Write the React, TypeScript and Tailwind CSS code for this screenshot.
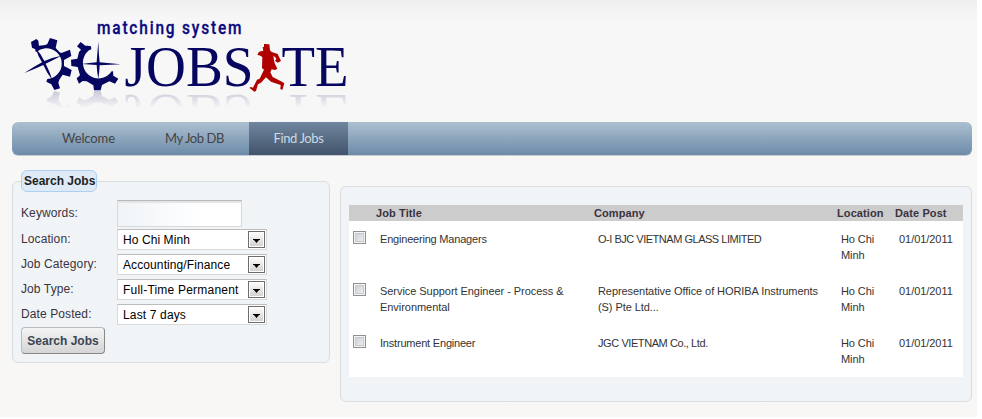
import React from "react";

const jobs = [
  { title: "Engineering Managers", company: "O-I BJC VIETNAM GLASS LIMITED", titleTracking: "tracking-[-0.2px]", companyTracking: "tracking-[-0.48px]" },
  { title: "Service Support Engineer - Process & Environmental", company: "Representative Office of HORIBA Instruments (S) Pte Ltd...", titleTracking: "tracking-[-0.05px]", companyTracking: "tracking-[-0.07px]" },
  { title: "Instrument Engineer", company: "JGC VIETNAM Co., Ltd.", titleTracking: "tracking-[-0.2px]", companyTracking: "tracking-[-0.42px]" },
];

const filters = [
  { label: "Location:", value: "Ho Chi Minh", tracking: "tracking-[0.08px]" },
  { label: "Job Category:", value: "Accounting/Finance", tracking: "tracking-[0.1px]" },
  { label: "Job Type:", value: "Full-Time Permanent", tracking: "tracking-[0.21px]" },
  { label: "Date Posted:", value: "Last 7 days", tracking: "tracking-[0.15px]" },
];

function Gears() {
  return (
    <g transform="translate(10 10) scale(.33333)" fill="#060660">
      <path d="M63 96 L79 87 L85 92 L87 107 L106 105 L112 102 L120 84 L142 91 L137 114 L149 127 L154 129 L180 119 L184 138 L162 150 L162 168 L185 180 L180 200 L158 194 L148 209 L145 218 L150 235 L133 240 L124 223 L109 215 L112 207 A46 46 0 0 0 106 115 Q90 117 79 126 L76 124 L76 118 L66 113 Z" />
      <path d="M43 189 Q72 170 96 157 Q84 139 77 115 Q94 133 103 153 Q127 142 154 137 Q130 150 107 161 Q119 184 127 210 Q110 188 100 165 Q72 178 43 189 Z" />
      <path d="M201 109 L212 96 L226 107 L233 107 L243 109 L244 118 L237 121 A47 47 0 1 0 305 184 L309 184 L310 197 L325 206 L315 221 L298 214 L276 225 L272 241 L252 241 L250 226 L230 214 L218 213 L207 221 L200 205 L210 196 L203 171 L184 168 L183 149 L202 146 L207 126 L213 119 Z" />
      <path d="M265 94 Q266 130 269 157 Q300 160 332 163 Q300 165 269 166 Q268 188 265 207 Q261 188 260 165 Q238 164 215 162 Q238 159 260 157 Q262 130 265 94 Z" />
    </g>
  );
}

function Logo() {
  return (
    <svg width="360" height="122" viewBox="0 0 360 122" className="block">
      <defs>
        <linearGradient id="fade" x1="0" x2="0" y1="0" y2="1">
          <stop offset="0" stopColor="#fff" stopOpacity=".2" />
          <stop offset="1" stopColor="#fff" stopOpacity="0" />
        </linearGradient>
        <mask id="reflection" maskUnits="userSpaceOnUse" x="0" y="90" width="360" height="18">
          <rect x="0" y="90" width="360" height="18" fill="url(#fade)" />
        </mask>
        <g id="mark">
          <Gears />
          <g fill="#060660" fontFamily="'Liberation Serif', serif" fontSize="56">
            <text x="124.5" y="86" textLength="129" lengthAdjust="spacingAndGlyphs">JOBS</text>
            <text x="281.5" y="86" textLength="67" lengthAdjust="spacingAndGlyphs">TE</text>
          </g>
        </g>
      </defs>
      <text transform="translate(97 34) scale(.86 1)" fill="#0a0a80" fontFamily="Roboto, sans-serif" fontSize="18" fontWeight="500" stroke="#0a0a80" strokeWidth=".3" textLength="168" lengthAdjust="spacing">matching system</text>
      <use href="#mark" />
      <g mask="url(#reflection)">
        <use href="#mark" transform="translate(0 181) scale(1 -1)" />
      </g>
      <path transform="translate(180 10) scale(.33333)" fill="#b00000" d="M252 102 L268 103 L270 121 L275 126 L293 132 L303 153 L293 158 L285 152 L289 147 L285 140 L280 139 L284 160 L292 176 L285 180 L275 178 L271 187 L278 201 L306 215 L313 220 L307 240 L301 237 L302 225 L273 215 L258 202 L243 218 L234 223 L228 243 L223 245 L208 233 L213 231 L219 233 L231 209 L239 206 L252 179 L246 174 L247 141 L241 137 L232 134 L237 125 L250 122 L248 112 L252 110 Z" />
    </svg>
  );
}

function Select({ value, tracking }: { value: string; tracking: string }) {
  return (
    <div className="flex h-[21px] w-[150px] items-center justify-between border border-[#d9d9d9] border-t-[#bcbcbc] bg-white pr-px pl-[5px] text-black">
      <span className={"whitespace-nowrap " + tracking}>{value}</span>
      <span className="flex h-[17px] w-[17px] shrink-0 items-center justify-center border border-[#6d6d6d] bg-linear-to-b from-white to-[#cfcfcf] shadow-[inset_0_0_0_1px_#fff]">
        <svg width="7" height="4" viewBox="0 0 7 4" className="mt-[3px]">
          <path d="M0 0H7V1H6L3.5 4L1 1H0Z" />
        </svg>
      </span>
    </div>
  );
}

export default function App() {
  return (
    <div className="h-[419px] w-[982px] overflow-hidden bg-white font-['Liberation_Sans',Arial,sans-serif]">
      <div className="h-[417px] w-[977px] bg-linear-to-b from-[#efefef] via-[#f7f7f7] via-[20px] to-[#f8f7f6]">
        <header className="h-[122px]">
          <Logo />
        </header>
        <nav className="ml-3 flex h-[33px] w-[960px] rounded-[6px] bg-linear-to-b from-[#adc0d1] to-[#6c8ba8] pl-[25px] font-[Lato,sans-serif] text-[13px] leading-[33px] text-[#444] shadow-[0_1px_0_#c5cbd0]">
          <a className="w-[103px] text-center tracking-[-0.1px]">Welcome</a>
          <a className="w-[109px] text-center tracking-[-0.4px]">My Job DB</a>
          <a className="w-[99px] bg-linear-to-b from-[#70879f] to-[#41546b] text-center tracking-[-0.4px] text-[#ccd8e4]">Find Jobs</a>
        </nav>
        <main className="ml-3 flex items-start gap-[10px] pt-[15px] text-[12px] text-[#3a3340]">
          <fieldset className="h-[193px] w-[318px] rounded-[6px] border border-[#d9dddf] bg-[#f0f4f7] px-2">
            <legend className="h-[22px] w-[76px] rounded-[6px] border border-[#aed0ee] bg-[#deebf7] pl-[2px] text-left leading-[20px] font-bold whitespace-nowrap text-[#222]">Search Jobs</legend>
            <div className="flex h-[37px] items-start pt-2">
              <label className="w-[96px] pt-[4px] leading-[18px] tracking-[0.1px]">Keywords:</label>
              <div className="h-[27px] w-[125px] border border-[#d9d9d9] border-t-[#b8b8b8] bg-linear-to-r from-[#f0f4f7] to-white to-70% shadow-[inset_0_2px_1px_#e2e4e6]" />
            </div>
            {filters.map((f) => (
              <div key={f.label} className="flex h-[25px] items-start">
                <label className="w-[96px] leading-[20px] tracking-[0.1px]">{f.label}</label>
                <Select value={f.value} tracking={f.tracking} />
              </div>
            ))}
            <button className="mt-[-2px] block h-[27px] w-[84px] rounded-[4px] border border-[#bbb] border-r-[#888] border-b-[#888] bg-linear-to-b from-[#f4f4f4] to-[#d5d5d5] font-bold whitespace-nowrap text-[#3b4654]">Search Jobs</button>
          </fieldset>
          <section className="mt-4 h-[216px] w-[632px] rounded-[6px] border border-[#d9dddf] bg-[#f0f4f7] px-2 pt-[18px]">
            <div className="w-[614px] bg-white text-[11px] leading-4">
              <div className="grid h-4 grid-cols-[27px_218px_243px_58px_68px] bg-[#ccc] font-bold tracking-[0.1px]">
                <span />
                <span>Job Title</span>
                <span>Company</span>
                <span>Location</span>
                <span>Date Post</span>
              </div>
              {jobs.map((job) => (
                <div key={job.title} className="grid h-[52px] grid-cols-[31px_218px_243px_58px_64px] pt-[10px] text-[#333]">
                  <span className="ml-1 h-[13px] w-[13px] border border-[#8e8f8f] bg-linear-to-br from-[#c4c8ce] to-[#f6f6f6] shadow-[inset_0_0_0_1px_#f4f4f4,inset_0_0_0_2px_#c6cbd1]" />
                  <span className={"pr-4 " + job.titleTracking}>{job.title}</span>
                  <span className={"pr-4 " + job.companyTracking}>{job.company}</span>
                  <span className="pr-4 tracking-[-0.1px]">Ho Chi Minh</span>
                  <span className="tracking-[-0.05px]">01/01/2011</span>
                </div>
              ))}
            </div>
          </section>
        </main>
      </div>
    </div>
  );
}
